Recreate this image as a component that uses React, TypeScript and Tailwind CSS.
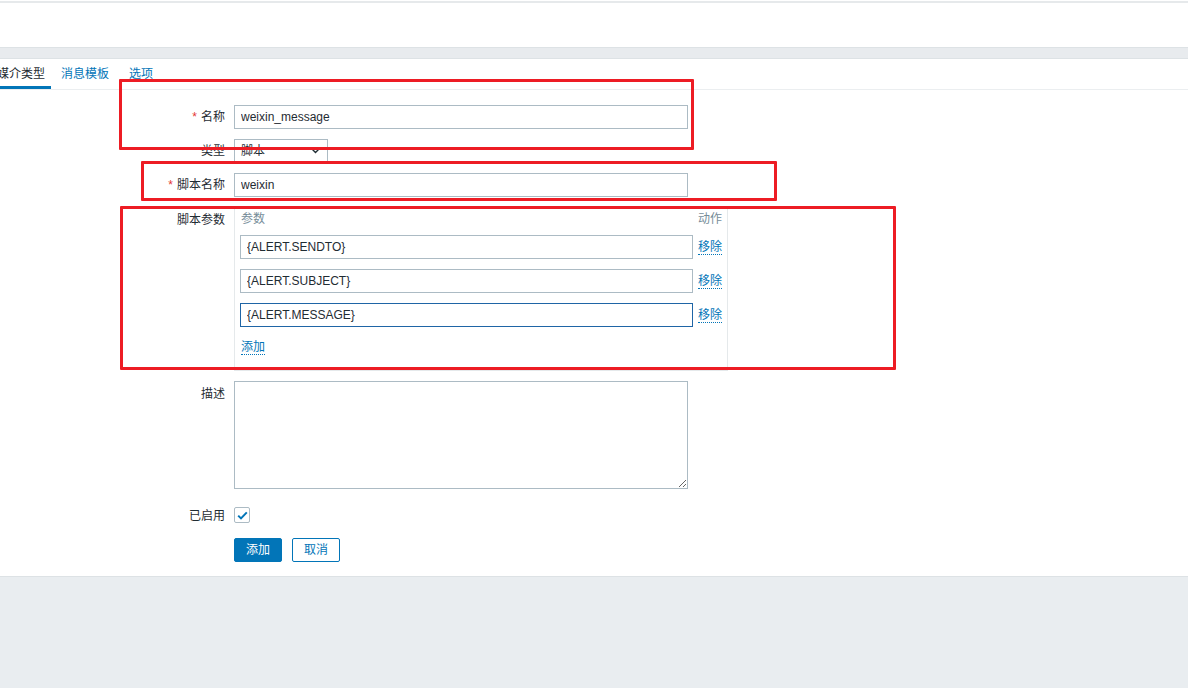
import React from 'react';

const font = "font-['Liberation_Sans','Noto_Sans_CJK_SC',sans-serif]";

const Label: React.FC<{ text: string; required?: boolean }> = ({ text, required }) => (
  <div className="w-[225px] shrink-0 text-right leading-[24px] text-[#1f2c33]">
    {required && <span className="text-[#e33734] mr-[4px]">*</span>}
    {text}
  </div>
);

const params = ['{ALERT.SENDTO}', '{ALERT.SUBJECT}', '{ALERT.MESSAGE}'];

export default function App() {
  return (
    <div className={`${font} text-[12px] relative w-[1188px] h-[688px] overflow-hidden bg-[#e9edf0]`}>
      {/* header strip */}
      <div className="h-[47px] bg-white pt-[1px]">
        <div className="border-t-2 border-[#e6e9eb]" />
      </div>
      <div className="h-[12px] bg-[#e8ebee] border-t border-b border-[#dde2e5]" />

      {/* panel */}
      <div className="bg-white border-b border-[#dde2e5] pb-[14px]">
        {/* tabs */}
        <div className="flex h-[31px] border-b border-[#ebeef0] ml-[-11px]">
          <div className="pl-[8px] pr-[6px] pt-[6px] text-[#1f2c33] border-b-[3px] border-[#0275b8] whitespace-nowrap">媒介类型</div>
          <div className="pl-[10px] pr-[8px] pt-[6px] text-[#0275b8] whitespace-nowrap">消息模板</div>
          <div className="px-[12px] pt-[6px] text-[#0275b8] whitespace-nowrap">选项</div>
        </div>

        <div className="pt-[15px] flex flex-col gap-[10px]">
          <div className="flex gap-[9px]">
            <Label text="名称" required />
            <input
              readOnly
              value="weixin_message"
              className="w-[454px] h-[24px] border border-[#acbbc4] px-[6px] text-[#1f2c33] outline-none"
            />
          </div>

          <div className="flex gap-[9px]">
            <Label text="类型" />
            <div className="w-[94px] h-[24px] border border-[#acbbc4] px-[6px] flex items-center justify-between text-[#1f2c33]">
              <span>脚本</span>
              <svg width="9" height="6" viewBox="0 0 9 6" className="mr-[1px]">
                <path d="M1 1l3.5 3.5L8 1" stroke="#1f2c33" strokeWidth="1.4" fill="none" />
              </svg>
            </div>
          </div>

          <div className="flex gap-[9px]">
            <Label text="脚本名称" required />
            <input
              readOnly
              value="weixin"
              className="w-[454px] h-[24px] border border-[#acbbc4] px-[6px] text-[#1f2c33] outline-none"
            />
          </div>

          <div className="flex gap-[9px]">
            <div className="w-[225px] shrink-0 text-right pt-[4px] text-[#1f2c33]">脚本参数</div>
            <div className="w-[494px] h-[164px] border border-[#e5e9eb] px-[5px] pt-[4px]">
              <div className="flex justify-between text-[#768d99] h-[23px] leading-[14px] pl-[1px]">
                <span>参数</span>
                <span>动作</span>
              </div>
              <div className="flex flex-col gap-[10px]">
                {params.map((p, i) => (
                  <div key={p} className="flex items-center gap-[5px]">
                    <input
                      readOnly
                      value={p}
                      className={`w-[453px] h-[24px] px-[6px] text-[#1f2c33] outline-none border ${
                        i === 2 ? 'border-[#1f65a6]' : 'border-[#acbbc4]'
                      }`}
                    />
                    <span className="text-[#0275b8] border-b border-dotted border-[#0275b8] leading-[14px] whitespace-nowrap">
                      移除
                    </span>
                  </div>
                ))}
              </div>
              <div className="mt-[11px] pl-[1px]">
                <span className="text-[#0275b8] border-b border-dotted border-[#0275b8] leading-[14px] inline-block">添加</span>
              </div>
            </div>
          </div>

          <div className="flex gap-[9px]">
            <div className="w-[225px] shrink-0 text-right pt-[4px] text-[#1f2c33]">描述</div>
            <textarea
              readOnly
              className="w-[454px] h-[108px] border border-[#acbbc4] outline-none resize"
            />
          </div>

          <div className="flex gap-[9px] items-center mt-[8px] h-[16px]">
            <div className="w-[225px] shrink-0 text-right text-[#1f2c33] leading-[16px] pt-[1px]">已启用</div>
            <span className="w-[16px] h-[16px] border border-[#acbbc4] rounded-[2px] flex items-center justify-center">
              <svg width="11" height="9" viewBox="0 0 11 9">
                <path d="M1.2 4.6l2.8 2.8L9.8 1.4" stroke="#0275b8" strokeWidth="2" fill="none" />
              </svg>
            </span>
          </div>

          <div className="flex gap-[10px] ml-[234px] mt-[5px]">
            <button className="w-[48px] h-[24px] bg-[#0275b8] text-white rounded-[2px] border border-[#0275b8]">添加</button>
            <button className="w-[48px] h-[24px] bg-white text-[#0275b8] rounded-[2px] border border-[#0275b8]">取消</button>
          </div>
        </div>
      </div>

      {/* red annotation boxes */}
      <div className="absolute left-[119px] top-[79px] w-[575px] h-[71px] border-[3px] border-[#ed1c24] rounded-[1px] pointer-events-none" />
      <div className="absolute left-[141px] top-[161px] w-[636px] h-[40px] border-[3px] border-[#ed1c24] rounded-[1px] pointer-events-none" />
      <div className="absolute left-[120px] top-[206px] w-[776px] h-[164px] border-[3px] border-[#ed1c24] rounded-[1px] pointer-events-none" />
    </div>
  );
}
